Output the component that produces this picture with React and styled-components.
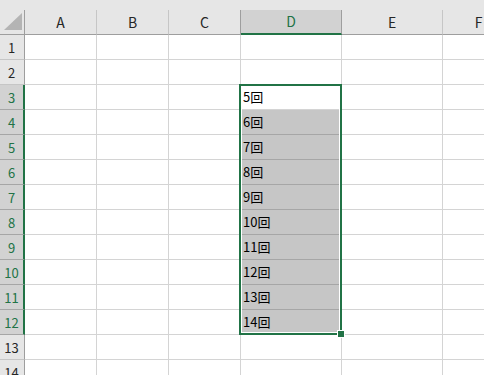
import React from 'react';
import styled, { createGlobalStyle, css } from 'styled-components';

const GlobalStyle = createGlobalStyle`
  html, body {
    margin: 0;
    padding: 0;
    background: #ffffff;
    overflow: hidden;
  }
`

const Sheet = styled.div`
  width: 484px;
  height: 375px;
  overflow: hidden;
  background: #ffffff;
  font-family: 'Noto Sans CJK JP', 'Noto Sans', sans-serif;
`

const TopStrip = styled.div`
  height: 10px;
  background: #e6e6e6;
`

const Grid = styled.div`
  position: relative;
  display: grid;
  grid-template-columns: 25px 72px 72px 72px 101px 101px 72px;
  grid-auto-rows: 25px;
  width: 515px;
`

const Corner = styled.div`
  box-sizing: border-box;
  background: #e6e6e6;
  border-right: 1px solid #9e9e9e;
  border-bottom: 1px solid #9e9e9e;
  display: flex;
  align-items: flex-end;
  justify-content: flex-end;
  padding: 0 2px 4px 0;
`

const ColHeader = styled.div`
  box-sizing: border-box;
  background: #e6e6e6;
  border-right: 1px solid #c6c6c6;
  border-bottom: 1px solid #9e9e9e;
  color: #262626;
  font-size: 14px;
  display: flex;
  align-items: center;
  justify-content: center;
  padding-bottom: 1px;

  ${p => p.$active && css`
    background: #d2d2d2;
    color: #217346;
    border-bottom: 2px solid #217346;
    border-right-color: #9e9e9e;
    box-shadow: -1px 0 0 #9e9e9e;
  `}
`

const RowHeader = styled.div`
  box-sizing: border-box;
  background: #e6e6e6;
  border-right: 1px solid #9e9e9e;
  border-bottom: 1px solid #c6c6c6;
  color: #262626;
  font-size: 13px;
  display: flex;
  align-items: center;
  justify-content: center;
  padding-right: 1px;

  ${p => p.$active && css`
    background: #d2d2d2;
    color: #217346;
    border-right: 2px solid #217346;
    border-bottom-color: #a6a6a6;
    padding-right: 0;
  `}
`

const Cell = styled.div`
  box-sizing: border-box;
  border-right: 1px solid #d4d4d4;
  border-bottom: 1px solid #d4d4d4;
  color: #000000;
  font-size: 13px;
  display: flex;
  align-items: center;
  padding: 0 0 2px 2px;
  white-space: nowrap;

  ${p => p.$selected && css`
    background: #c6c6c6;
    border-bottom-color: #a6a6a6;
  `}
`

const Selection = styled.div`
  position: absolute;
  left: 239px;
  top: 74px;
  width: 103px;
  height: 251px;
  box-sizing: border-box;
  border: 2px solid #217346;
  box-shadow: inset 0 0 0 1px #ffffff;
  pointer-events: none;
`

const FillHandle = styled.div`
  position: absolute;
  right: -5px;
  bottom: -5px;
  width: 6px;
  height: 6px;
  background: #217346;
  border: 1px solid #ffffff;
`

const columns = ['A', 'B', 'C', 'D', 'E', 'F']
const rows = Array.from({ length: 14 }, (_, i) => i + 1)

const cellText = (col, row) => {
  if (col === 'D' && row >= 3 && row <= 12) return `${row + 2}回`
  return ''
}

const CornerTriangle = () => (
  <svg width="18" height="17" viewBox="0 0 18 17">
    <polygon points="18,0 18,17 0,17" fill="#b4b4b4" />
  </svg>
)

const App = () => {
  const activeRow = row => row >= 3 && row <= 12

  return (
    <React.Fragment>
      <GlobalStyle />
      <Sheet>
        <TopStrip />
        <Grid>
          <Corner><CornerTriangle /></Corner>
          { columns.map(col => (
            <ColHeader key={ col } $active={ col === 'D' }>{ col }</ColHeader>
          )) }
          { rows.map(row => (
            <React.Fragment key={ row }>
              <RowHeader $active={ activeRow(row) }>{ row }</RowHeader>
              { columns.map(col => (
                <Cell
                  key={ col }
                  $selected={ col === 'D' && row >= 4 && row <= 12 }>
                  { cellText(col, row) }
                </Cell>
              )) }
            </React.Fragment>
          )) }
          <Selection>
            <FillHandle />
          </Selection>
        </Grid>
      </Sheet>
    </React.Fragment>
  )
}

export default App
